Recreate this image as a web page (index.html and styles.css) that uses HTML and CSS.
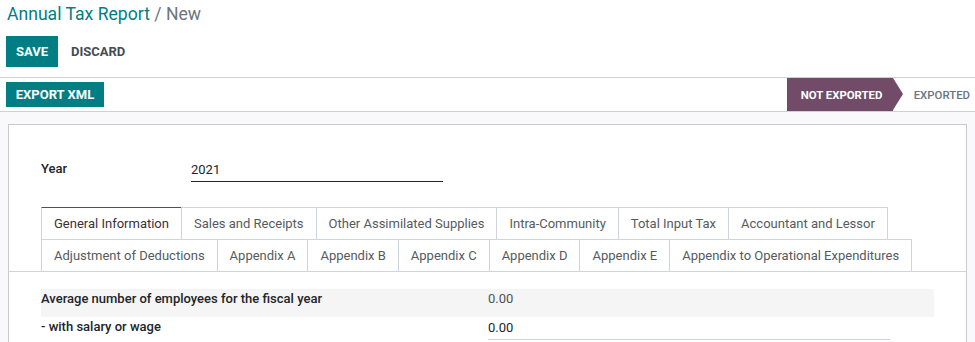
FILE: index.html
```html
<!DOCTYPE html>
<html>
<head>
<meta charset="utf-8">
<link rel="stylesheet" href="styles.css">
</head>
<body>
<div class="control-panel">
  <div class="breadcrumb"><span class="crumb">Annual Tax Report</span><span class="sep"> / </span><span class="current">New</span></div>
  <div class="cp-buttons">
    <button class="btn btn-primary btn-save">SAVE</button>
    <button class="btn btn-link">DISCARD</button>
  </div>
</div>
<div class="form-view">
  <div class="statusbar">
    <div class="statusbar-buttons">
      <button class="btn btn-primary btn-export">EXPORT XML</button>
    </div>
    <div class="status-steps">
      <div class="step step-active">NOT EXPORTED</div>
      <div class="step">EXPORTED</div>
    </div>
  </div>
  <div class="sheet-bg">
    <div class="sheet">
      <div class="year-row">
        <div class="year-label">Year</div>
        <div class="year-input">2021</div>
      </div>
      <div class="notebook">
        <ul class="tabs">
          <li class="tab active">General Information</li>
          <li class="tab">Sales and Receipts</li>
          <li class="tab">Other Assimilated Supplies</li>
          <li class="tab">Intra-Community</li>
          <li class="tab">Total Input Tax</li>
          <li class="tab">Accountant and Lessor</li>
          <li class="tab">Adjustment of Deductions</li>
          <li class="tab">Appendix A</li>
          <li class="tab">Appendix B</li>
          <li class="tab">Appendix C</li>
          <li class="tab">Appendix D</li>
          <li class="tab">Appendix E</li>
          <li class="tab">Appendix to Operational Expenditures</li>
        </ul>
        <div class="tab-content">
          <div class="field-row shaded">
            <div class="field-label">Average number of employees for the fiscal year</div>
            <div class="field-value">0.00</div>
          </div>
          <div class="field-row">
            <div class="field-label">- with salary or wage</div>
            <div class="field-input">0.00</div>
          </div>
        </div>
      </div>
    </div>
  </div>
</div>
</body>
</html>
```

FILE: styles.css
```css
* { box-sizing: border-box; }
html, body {
  margin: 0;
  padding: 0;
  height: 100%;
  overflow: hidden;
}
body {
  font-family: Roboto, "Noto Sans", sans-serif;
  font-size: 13px;
  color: #212529;
  background: #fff;
}
.control-panel {
  padding: 0 6px 0 6px;
  height: 77px;
}
.breadcrumb {
  font-size: 17.6px;
  line-height: 28px;
  padding-left: 1px;
}
.crumb { color: #017e84; }
.sep, .current { color: #6c757d; }
.cp-buttons {
  display: flex;
  align-items: center;
  margin-top: 8px;
}
.btn {
  font-family: Roboto, sans-serif;
  font-size: 13px;
  font-weight: 700;
  border: 0;
  cursor: pointer;
  padding: 0;
}
.btn-primary {
  background: #017e84;
  color: #fff;
}
.btn-save {
  width: 52px;
  height: 31px;
}
.btn-link {
  background: none;
  color: #444b53;
  margin-left: 13px;
  height: 31px;
}
.statusbar {
  display: flex;
  justify-content: space-between;
  align-items: stretch;
  border-top: 1px solid #d0d0d4;
  border-bottom: 1px solid #d0d0d4;
  height: 35px;
}
.statusbar-buttons {
  display: flex;
  align-items: center;
  padding-left: 6px;
}
.btn-export {
  width: 98px;
  height: 25px;
  margin-top: -1px;
}
.status-steps {
  display: flex;
  align-items: stretch;
}
.step {
  display: flex;
  align-items: center;
  font-size: 11.4px;
  font-weight: 500;
  color: #6c757d;
  padding: 0 5px 0 21px;
  text-transform: uppercase;
}
.step-active {
  position: relative;
  background: #714b67;
  color: #fff;
  font-weight: 700;
  width: 106px;
  padding: 0 0 0 14px;
}
.step-active::after {
  content: "";
  position: absolute;
  right: -10px;
  top: 0;
  border-top: 16.5px solid transparent;
  border-bottom: 16.5px solid transparent;
  border-left: 10px solid #714b67;
}
.sheet-bg {
  background: #f9f9fb;
  padding: 12px 8px 0 8px;
  height: 100%;
}
.sheet {
  background: #fff;
  border: 1px solid #c9c9ce;
  width: 959px;
  min-height: 300px;
  padding: 32px 0 0 0;
}
.year-row {
  display: flex;
  align-items: flex-end;
  padding: 0 32px;
  height: 25px;
}
.year-label {
  width: 150px;
  font-weight: 500;
  align-self: flex-start;
  padding-top: 4px;
}
.year-input {
  width: 252px;
  border-bottom: 1px solid #212529;
  line-height: 18px;
  padding-bottom: 2px;
}
.notebook {
  margin-top: 25px;
}
.tabs {
  list-style: none;
  margin: 0;
  padding: 0 31px 0 32px;
  display: flex;
  flex-wrap: wrap;
  border-bottom: 1px solid #ced4da;
}
.tab {
  border: 1px solid #ced4da;
  margin-right: -1px;
  margin-bottom: -1px;
  padding: 0 12px;
  height: 33px;
  line-height: 31px;
  color: #555b60;
  white-space: nowrap;
}
.tab.active {
  border-top-color: #5c4a5a;
  color: #3b2f3a;
}
.tab-content {
  padding: 17px 32px 0 32px;
}
.field-row {
  display: flex;
  align-items: flex-start;
  line-height: 20px;
  height: 28px;
}
.field-row.shaded {
  background: #f5f5f5;
}
.field-label {
  width: 447px;
  font-weight: 500;
  color: #212529;
}
.field-value {
  color: #4c5257;
}
.field-input {
  width: 402px;
  border-bottom: 1px solid #ced4da;
  padding: 1px 0;
}
```
